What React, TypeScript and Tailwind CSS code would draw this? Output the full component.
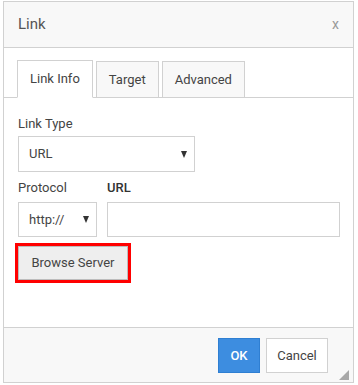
import React from 'react';

const tabs = [
  { label: 'Link Info', active: true },
  { label: 'Target', active: false },
  { label: 'Advanced', active: false },
];

function Caret() {
  return (
    <svg width="6" height="7" viewBox="0 0 6 7" className="shrink-0">
      <path d="M0 0 H6 L3 7 Z" fill="#333" />
    </svg>
  );
}

export default function App() {
  return (
    <div className="min-h-[385px] bg-white pl-[3px] pt-[1px] font-['Roboto',sans-serif] text-[13px] text-[#444]">
      <div className="relative flex h-[382px] w-[351px] flex-col border border-[#d1d1d1] bg-white">
        {/* header */}
        <div className="flex h-[46px] items-center justify-between border-b border-[#d1d1d1] bg-[#f8f8f8] pl-[14px] pr-[14px]">
          <span className="text-[15px] text-[#555]">Link</span>
          <span className="text-[14px] text-[#999]">x</span>
        </div>

        {/* body */}
        <div className="flex-1">
          <div className="flex gap-[3px] border-b border-[#d1d1d1] pl-[13px] pt-[12px]">
            {tabs.map((tab) => (
              <div
                key={tab.label}
                className={
                  tab.active
                    ? '-mb-px flex h-[38px] items-center border border-b-white border-[#d1d1d1] bg-white px-[12px]'
                    : 'mt-px flex h-[36px] items-center border border-b-0 border-[#d1d1d1] bg-[#f8f8f8] px-[12px]'
                }
              >
                {tab.label}
              </div>
            ))}
          </div>

          <div className="pl-[14px] pt-[18px]">
            <div className="leading-[16px]">Link Type</div>
            <div className="mt-[4px] flex h-[36px] w-[177px] items-center justify-between border border-[#d1d1d1] bg-white pl-[10px] pr-[7px]">
              <span>URL</span>
              <Caret />
            </div>

            <div className="mt-[8px] flex gap-[10px]">
              <div className="w-[79px]">
                <div className="leading-[16px]">Protocol</div>
                <div className="mt-[6px] flex h-[35px] items-center justify-between border border-[#d1d1d1] bg-white pl-[10px] pr-[7px]">
                  <span>http://</span>
                  <Caret />
                </div>
              </div>
              <div className="w-[233px]">
                <div className="font-medium leading-[16px] text-[#333]">URL</div>
                <div className="mt-[6px] h-[35px] border border-[#d1d1d1] bg-white" />
              </div>
            </div>

            <div className="-ml-[3px] mt-[6px] w-fit border-[3px] border-[#ff0000]">
              <div className="flex h-[34px] w-[110px] items-center justify-center border border-[#bcbcbc] bg-[#eeeeee]">
                Browse Server
              </div>
            </div>
          </div>
        </div>

        {/* footer */}
        <div className="flex h-[55px] justify-end gap-[6px] border-t border-[#d1d1d1] bg-[#f8f8f8] pr-[25px] pt-[10px]">
          <div className="flex h-[35px] w-[42px] items-center justify-center border border-[#2f7fd2] bg-[#3d8de0] font-medium text-white">
            OK
          </div>
          <div className="flex h-[35px] w-[62px] items-center justify-center border border-[#d1d1d1] bg-white">
            Cancel
          </div>
        </div>

        <svg width="10" height="10" viewBox="0 0 10 10" className="absolute bottom-[2px] right-[4px]">
          <path d="M10 0 V10 H0 Z" fill="#a8a8a8" />
        </svg>
      </div>
    </div>
  );
}
